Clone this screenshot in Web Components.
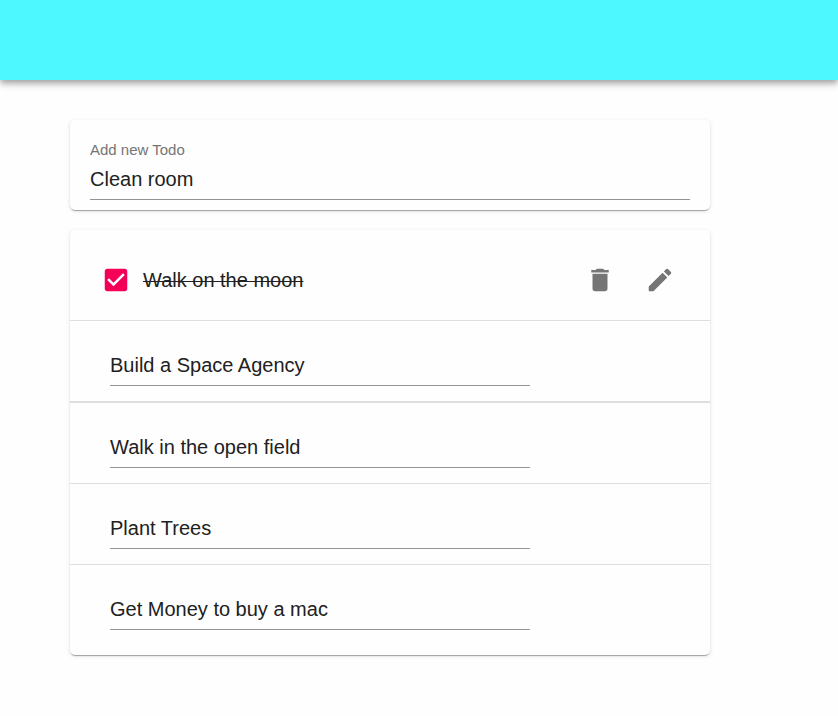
<!DOCTYPE html>
<html lang="en">
<head>
<meta charset="utf-8">
<meta name="viewport" content="width=device-width, initial-scale=1">
<title>Todos</title>
<style>
  body { margin: 0; background: #fefefe; color: #212121; font: 20px/24px "Liberation Sans", Arial, sans-serif; }
</style>
</head>
<body>
<todo-app></todo-app>
<script>
class BaseElement extends HTMLElement {
  render(html) {
    if (!this.shadowRoot) this.attachShadow({ mode: "open" });
    const template = document.createElement("template");
    template.innerHTML = "<style>*{box-sizing:border-box}</style>" + html;
    this.shadowRoot.replaceChildren(template.content.cloneNode(true));
  }
}

customElements.define("app-header", class extends BaseElement {
  connectedCallback() {
    this.render(`<style>
      :host { display: block; }
      header { height: 80px; background: #4df9ff; box-shadow: 0 3px 5px -1px rgba(0,0,0,.2), 0 5px 6px 0 rgba(0,0,0,.14), 0 1px 12px 0 rgba(0,0,0,.12); }
    </style><header></header>`);
  }
});

customElements.define("paper-card", class extends BaseElement {
  connectedCallback() {
    this.render(`<style>
      :host { display: block; background: #fefefe; border-radius: 5px; box-shadow: 0 3px 1px -2px rgba(0,0,0,.2), 0 1px 1px 0 rgba(0,0,0,.14), 0 1px 4px 0 rgba(0,0,0,.12); }
    </style><slot></slot>`);
  }
});

customElements.define("text-field", class extends BaseElement {
  connectedCallback() {
    this.render(`<style>
      :host { display: block; }
      label { display: block; color: #757575; font-size: 15px; line-height: 20px; }
      label[hidden] { display: none; }
      input { display: block; width: 100%; height: 40px; margin: 0; padding: 0 0 1px; border: 0; border-bottom: 1px solid #949494; border-radius: 0; background: none; color: inherit; font: inherit; outline: 0; }
      input:focus { border-bottom-color: #3f51b5; }
    </style><label for="field"></label><input id="field" type="text">`);
    const label = this.shadowRoot.querySelector("label");
    const input = this.shadowRoot.querySelector("input");
    label.textContent = this.getAttribute("label") || "";
    if (!label.textContent) { label.hidden = true; input.setAttribute("aria-label", "Edit todo"); }
    input.value = this.getAttribute("value") || "";
  }
});

customElements.define("check-box", class extends BaseElement {
  connectedCallback() {
    this.render(`<style>
      :host { display: block; }
      label { display: flex; align-items: center; gap: 12px; cursor: pointer; }
      .box { display: grid; width: 30px; height: 30px; color: #f50057; }
      input, svg { grid-area: 1 / 1; width: 30px; height: 30px; margin: 0; }
      input { appearance: none; border-radius: 4px; }
      svg { fill: currentColor; pointer-events: none; }
      .on, input:checked ~ .off { display: none; }
      input:checked ~ .on { display: block; }
      label:has(input:checked) .text { text-decoration: line-through 1px; }
    </style>
    <label><span class="box"><input type="checkbox" checked>
      <svg class="on" viewBox="0 0 24 24" aria-hidden="true"><path d="M19 3H5c-1.11 0-2 .9-2 2v14c0 1.1.89 2 2 2h14c1.11 0 2-.9 2-2V5c0-1.1-.89-2-2-2zm-9 14l-5-5 1.41-1.41L10 14.17l7.59-7.59L19 8l-9 9z"/></svg>
      <svg class="off" viewBox="0 0 24 24" aria-hidden="true"><path d="M19 5v14H5V5h14m0-2H5c-1.1 0-2 .9-2 2v14c0 1.1.9 2 2 2h14c1.1 0 2-.9 2-2V5c0-1.1-.9-2-2-2z"/></svg>
    </span><span class="text"><slot></slot></span></label>`);
  }
});

const ICONS = {
  delete: "M6 19c0 1.1.9 2 2 2h8c1.1 0 2-.9 2-2V7H6v12zM19 4h-3.5l-1-1h-5l-1 1H5v2h14V4z",
  edit: "M3 17.25V21h3.75L17.81 9.94l-3.75-3.75L3 17.25zM20.71 7.04c.39-.39.39-1.02 0-1.41l-2.34-2.34a.9959.9959 0 0 0-1.41 0l-1.83 1.83 3.75 3.75 1.83-1.83z"
};

customElements.define("icon-button", class extends BaseElement {
  connectedCallback() {
    this.render(`<style>
      :host { display: block; }
      button { display: block; padding: 15px; border: 0; border-radius: 50%; background: none; color: #757575; cursor: pointer; }
      button:hover { background: rgba(0,0,0,.04); }
      svg { display: block; width: 30px; height: 30px; fill: currentColor; }
    </style><button type="button"><svg viewBox="0 0 24 24" aria-hidden="true"><path d="${ICONS[this.getAttribute("icon")]}"/></svg></button>`);
    this.shadowRoot.querySelector("button").setAttribute("aria-label", this.getAttribute("label"));
  }
});

customElements.define("todo-item", class extends BaseElement {
  connectedCallback() {
    this.render(`<style>
      :host { display: flex; align-items: center; padding: 25px 40px 15px; border-bottom: 1px solid #dedede; }
      :host([view]) { justify-content: space-between; padding: 20px 20px 10px 31px; }
      :host([thick]) { border-bottom-width: 2px; }
      :host(:last-child) { padding-bottom: 25px; border-bottom: 0; }
      ::slotted(text-field) { flex: 0 1 75%; }
      .actions { display: flex; }
    </style><slot></slot><div class="actions"><slot name="action"></slot></div>`);
  }
});

customElements.define("todo-app", class extends BaseElement {
  connectedCallback() {
    this.render(`<style>
      :host { display: block; }
      main { display: grid; gap: 20px; max-width: 710px; padding: 40px 0 60px 70px; }
      .new { padding: 20px 20px 10px; }
    </style>
    <app-header></app-header>
    <main>
      <paper-card class="new"><text-field label="Add new Todo" value="Clean room"></text-field></paper-card>
      <paper-card>
        <todo-item view>
          <check-box>Walk on the moon</check-box>
          <icon-button slot="action" icon="delete" label="Delete"></icon-button>
          <icon-button slot="action" icon="edit" label="Edit"></icon-button>
        </todo-item>
        <todo-item thick><text-field value="Build a Space Agency"></text-field></todo-item>
        <todo-item><text-field value="Walk in the open field"></text-field></todo-item>
        <todo-item><text-field value="Plant Trees"></text-field></todo-item>
        <todo-item><text-field value="Get Money to buy a mac"></text-field></todo-item>
      </paper-card>
    </main>`);
  }
});
</script>
</body>
</html>
